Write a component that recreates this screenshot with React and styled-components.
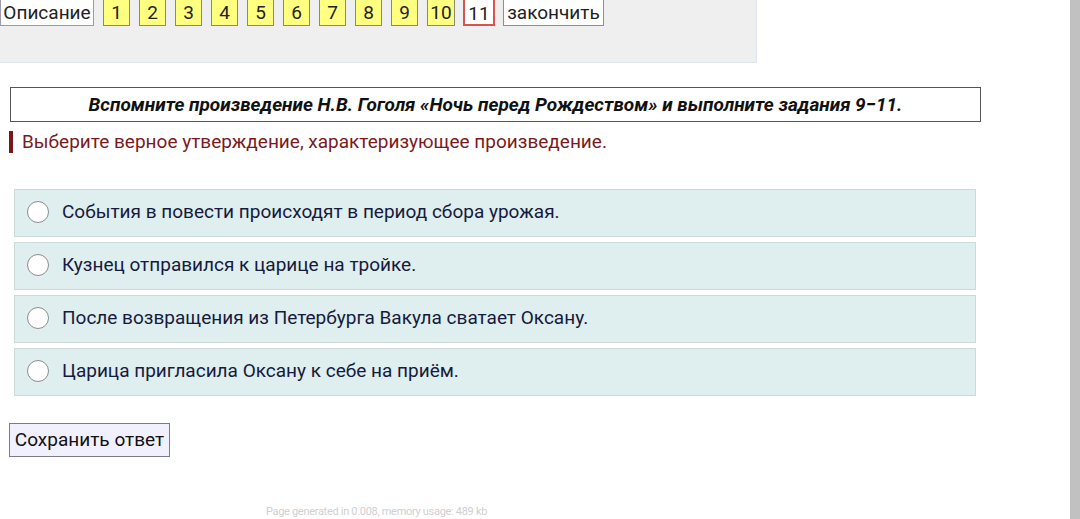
import React from 'react';
import styled, { createGlobalStyle } from 'styled-components';

const GlobalStyle = createGlobalStyle`
  html, body {
    margin: 0;
    padding: 0;
    background: #fff;
    font-family: Roboto, "Liberation Sans", sans-serif;
    overflow: hidden;
  }
`;

const Page = styled.div`
  display: flex;
  width: 1080px;
  height: 519px;
`;

const Main = styled.div`
  flex: 1;
  display: flex;
  flex-direction: column;
`;

const ScrollStrip = styled.div`
  width: 10px;
  background: #c1c1c1;
`;

const NavPanel = styled.div`
  width: 757px;
  height: 63px;
  background: #efeff0;
  border-right: 1px solid #dfe5ef;
  border-bottom: 1px solid #dfe5ef;
  box-sizing: border-box;
`;

const NavRow = styled.div`
  display: flex;
  align-items: flex-start;
  margin-top: -6px;
`;

const NavButton = styled.div`
  box-sizing: border-box;
  height: 32px;
  padding-top: 6px;
  width: ${({ $w }) => $w}px;
  margin-right: ${({ $gap }) => $gap}px;
  font-size: 19px;
  line-height: 24px;
  text-align: center;
  white-space: nowrap;
  color: #222;
  background: ${({ $bg }) => $bg};
  border: ${({ $border }) => $border};
`;

const Content = styled.div`
  padding: 24px 0 0 9px;
  display: flex;
  flex-direction: column;
`;

const Instruction = styled.div`
  width: 971px;
  box-sizing: border-box;
  height: 35px;
  margin-left: 1px;
  border: 1px solid #555;
  display: flex;
  align-items: center;
  justify-content: center;
  font-weight: bold;
  font-style: italic;
  font-size: 19px;
  color: #111;
`;

const Question = styled.div`
  margin-top: 9px;
  border-left: 4px solid #7a1518;
  padding-left: 9px;
  height: 22px;
  line-height: 22px;
  font-size: 19px;
  color: #7a1a1e;
`;

const Options = styled.div`
  margin-top: 36px;
  margin-left: 5px;
  display: flex;
  flex-direction: column;
  gap: 5px;
`;

const Option = styled.label`
  box-sizing: border-box;
  width: 962px;
  height: 48px;
  display: flex;
  align-items: center;
  background: #dfeeef;
  border: 1px solid #cfd9da;
  padding: 0 0 3px 12px;
  font-size: 19px;
  color: #161a3c;
`;

const Radio = styled.span`
  box-sizing: border-box;
  width: 22px;
  height: 22px;
  border-radius: 50%;
  background: #fff;
  border: 1px solid #8d8d8d;
  margin-right: 13px;
  flex-shrink: 0;
`;

const SaveButton = styled.button`
  margin-top: 27px;
  width: 161px;
  height: 34px;
  box-sizing: border-box;
  background: #f1f0ff;
  border: 1px solid #7a7a8a;
  font-family: Roboto, "Liberation Sans", sans-serif;
  font-size: 19px;
  color: #111;
  padding: 0 0 2px;
`;

const Footer = styled.div`
  width: 753px;
  margin-top: 48px;
  text-align: center;
  font-size: 11px;
  color: #cfcfcf;
  letter-spacing: -0.3px;
`;

const numbers = ['1', '2', '3', '4', '5', '6', '7', '8', '9', '10'];

const options = [
  'События в повести происходят в период сбора урожая.',
  'Кузнец отправился к царице на тройке.',
  'После возвращения из Петербурга Вакула сватает Оксану.',
  'Царица пригласила Оксану к себе на приём.',
];

const App = () => {
  return (
    <Page>
      <GlobalStyle />
      <Main>
        <NavPanel>
          <NavRow>
            <NavButton $bg="#fff" $border="1px solid #9a9aa8" $w={94} $gap={9}>Описание</NavButton>
            {numbers.map((n) => (
              <NavButton
                key={n}
                $bg="#ffff80"
                $border="1px solid #8a8a70"
                $w={n === '10' ? 28 : 27}
                $gap={n === '10' ? 8 : 9}
              >
                {n}
              </NavButton>
            ))}
            <NavButton $bg="#fff" $border="2px solid #d9534f" $w={32} $gap={8}>11</NavButton>
            <NavButton $bg="#fff" $border="1px solid #8a8ab0" $w={101} $gap={0}>закончить</NavButton>
          </NavRow>
        </NavPanel>
        <Content>
          <Instruction>
            Вспомните произведение Н.В. Гоголя «Ночь перед Рождеством» и выполните задания 9−11.
          </Instruction>
          <Question>Выберите верное утверждение, характеризующее произведение.</Question>
          <Options>
            {options.map((o) => (
              <Option key={o}>
                <Radio />
                {o}
              </Option>
            ))}
          </Options>
          <div>
            <SaveButton>Сохранить ответ</SaveButton>
          </div>
        </Content>
        <Footer>Page generated in 0.008, memory usage: 489 kb</Footer>
      </Main>
      <ScrollStrip />
    </Page>
  );
};

export default App;
